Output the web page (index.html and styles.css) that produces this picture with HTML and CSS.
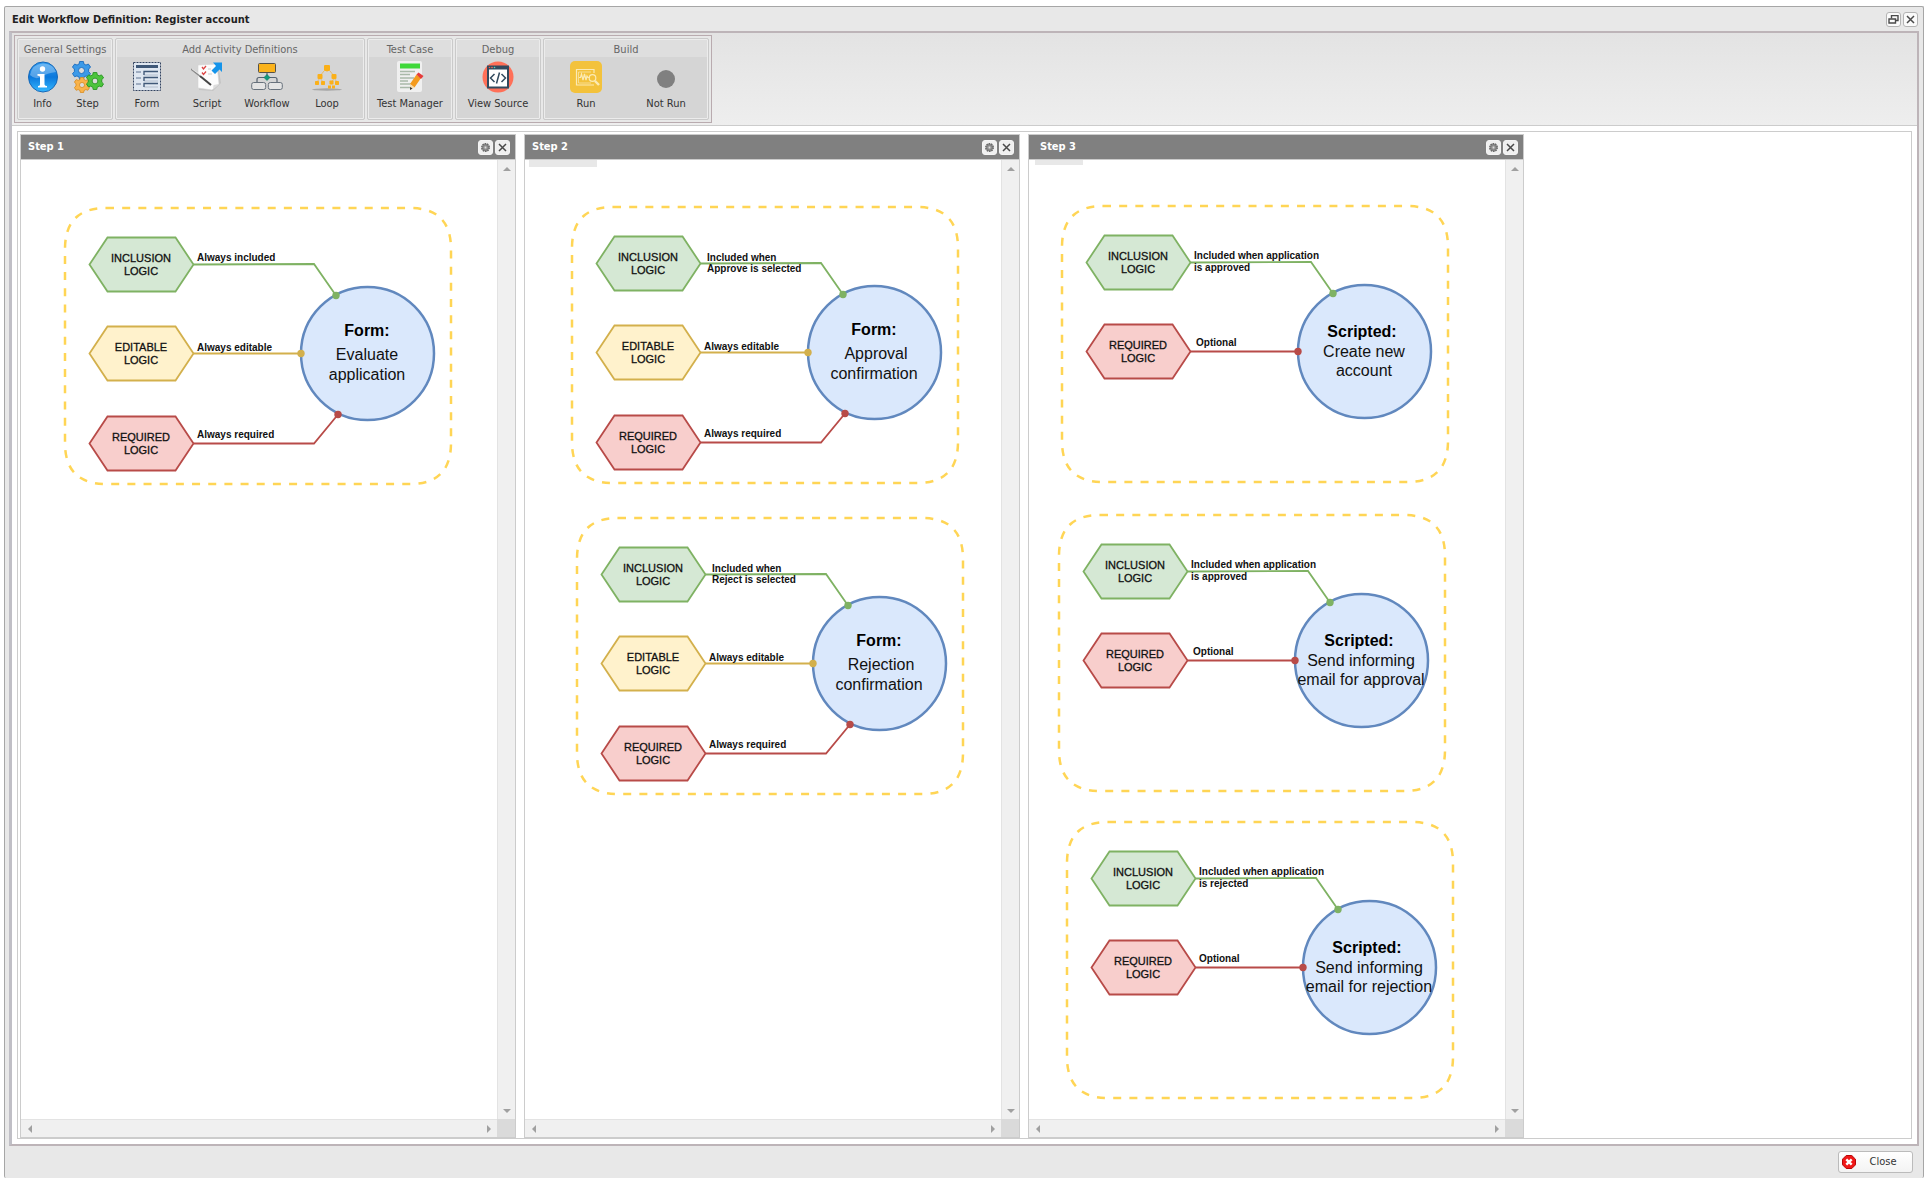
FILE: index.html
```html
<!DOCTYPE html>
<html lang="en">
<head>
<meta charset="utf-8">
<title>Edit Workflow Definition: Register account</title>
<link rel="stylesheet" href="styles.css">
</head>
<body>

<!-- Shapes shared by every activity diagram -->
<svg class="defs" width="0" height="0" aria-hidden="true">
  <defs>
    <symbol id="frame" overflow="visible">
      <path class="dash" d="M41 0H345Q386 0 386 41V235Q386 276 345 276H41Q0 276 0 235V41Q0 0 41 0Z"/>
    </symbol>
    <symbol id="hex" overflow="visible">
      <path d="M0 27L18 0H86L104 27L86 54H18Z"/>
    </symbol>
    <symbol id="gear" viewBox="0 0 9 9">
      <circle cx="4.500" cy="4.500" r="3.700" fill="#9a9a9a" stroke="#6b6b6b" stroke-width="1.600" stroke-dasharray="1.600 .7"/>
      <circle cx="4.500" cy="4.500" r="2.600" fill="#999" stroke="#707070" stroke-width=".6"/>
      <circle cx="4.500" cy="4.500" r=".9" fill="#ddd"/>
    </symbol>
    <symbol id="cross" viewBox="0 0 9 9">
      <path d="M1 1L8 8M8 1L1 8" stroke="#4a4a4a" stroke-width="1.500"/>
    </symbol>
    <linearGradient id="infoFill" x1="0" y1="0" x2="0" y2="1">
      <stop offset="0" stop-color="#2f9bf0"/><stop offset=".5" stop-color="#0b78dc"/><stop offset="1" stop-color="#35b8ff"/>
    </linearGradient>
    <symbol id="cog" viewBox="-10 -10 20 20">
      <path d="M-2-9.500L2-9.500L2.500-6.900L4.700-5.700L7.200-6.800L9.600-3.500L7.500-1.700L7.500 1.300L9.500 3.200L7.300 6.600L4.800 5.700L2.500 7L2 9.500L-2 9.500L-2.500 7L-4.800 5.700L-7.300 6.600L-9.500 3.200L-7.500 1.300L-7.500-1.700L-9.600-3.500L-7.200-6.800L-4.700-5.700L-2.500-6.900Z"/>
      <circle r="3.200" fill="#dcdcdc"/>
    </symbol>
  </defs>
</svg>

<main class="window">
  <header class="titlebar">
    <h1 class="title">Edit Workflow Definition: Register account</h1>
    <button class="tool" type="button" aria-label="Restore"><svg width="11" height="9" viewBox="0 0 11 9" fill="none" stroke="#4a4a4a"><path d="M3.500 3.500V.5H10V5.500H8" stroke-width="1.400"/><path d="M1 4H7.500V8H1Z" stroke-width="1.400"/></svg></button>
    <button class="tool" type="button" aria-label="Close window"><svg width="9" height="9"><use href="#cross"/></svg></button>
  </header>

  <div class="frame">
    <div class="toolbar">
      <div class="ribbon">
        <section class="group group-general">
          <h2 class="group-title">General Settings</h2>
          <div class="group-body">
            <button class="action" type="button">
              <svg width="32" height="32" viewBox="0 0 32 32"><ellipse cx="16" cy="16" rx="14.500" ry="15" fill="url(#infoFill)" stroke="#1668b8"/><path d="M3 14Q5 3 16 2.500Q27 3 29 11Q20 12 14 16Q8 19 3 14Z" fill="#fff" opacity=".3"/><circle cx="15.500" cy="8" r="2.700" fill="#fff"/><path d="M10.500 13H17.500V23.500Q18 25 20 25V26.500H11V25Q13 25 13 23.500V16Q13 14.800 10.500 14.800Z" fill="#fff"/></svg>
              Info
            </button>
            <button class="action" type="button">
              <svg width="32" height="32" viewBox="0 0 32 32"><use href="#cog" x="0" y="0" width="19" height="19" fill="#3c9ae8" stroke="#1f6fc0"/><use href="#cog" x="2" y="16" width="16" height="16" fill="#f9b34a" stroke="#d98a1c"/><use href="#cog" x="14" y="11" width="18" height="18" fill="#4cc43c" stroke="#279321"/></svg>
              Step
            </button>
          </div>
        </section>
        <section class="group group-activity">
          <h2 class="group-title">Add Activity Definitions</h2>
          <div class="group-body">
            <button class="action" type="button">
              <svg width="32" height="32" viewBox="0 0 32 32"><rect x="2.500" y="1.500" width="27" height="28" fill="#dfe7f1" stroke="#33435f" stroke-dasharray="2 1"/><rect x="5" y="4" width="22" height="3" fill="#3f5878"/><path d="M5 11H10M5 17H10M5 23H10" stroke="#5f7390"/><path d="M13 11.500V14H27M13 17.500V20H27M13 23.500V26H27" stroke="#b3bfce" fill="none"/><path d="M13 14V10.500H27M13 20V16.500H27M13 26V22.500H27" stroke="#3f5878" fill="none" stroke-width="1.300"/></svg>
              Form
            </button>
            <button class="action" type="button">
              <svg width="32" height="32" viewBox="0 0 32 32"><path d="M9 5L27 3L30 22L22 30L8 29Z" fill="#c4c4c4"/><path d="M7 4L26 3L28 23L21 29L7 27Z" fill="#fcfcfc" stroke="#d3d3d3" stroke-width=".6"/><path d="M22 28.500L28 23L22.500 24Z" fill="#ddd"/><path d="M11 6l1.500 2L15 5M11 11.500l1.500 2L15 10.500" fill="none" stroke="#dc4444" stroke-width="1.300"/><path d="M17 8H20M17 13H21" stroke="#ccc"/><path d="M0 8L10 16" stroke="#888" stroke-width="1.500"/><path d="M9 15L20 24" stroke="#444" stroke-width="2"/><path d="M1 8L11 15" stroke="#eee" stroke-width=".7"/><path d="M22 1.500H31V11L28.500 8.500L24 13L20.500 9.500L25 5Z" fill="#1594ea"/></svg>
              Script
            </button>
            <button class="action" type="button">
              <svg width="32" height="32" viewBox="0 0 32 32"><path d="M16 12V17M6 22V18.500Q6 16.500 8 16.500H24Q26 16.500 26 18.500V22" fill="none" stroke="#566270" stroke-width="1.200"/><rect x="7.500" y="2.500" width="17" height="9" rx="1" fill="#fbb31c" stroke="#56524a"/><path d="M16 13.500L19 16.500L16 19.500L13 16.500Z" fill="#119a7c" stroke="#0d7560" stroke-width=".6"/><rect x=".7" y="21.500" width="14" height="7" rx="2" fill="#e4e4e4" stroke="#67717c"/><rect x="17.300" y="21.500" width="14" height="7" rx="2" fill="#e4e4e4" stroke="#67717c"/></svg>
              Workflow
            </button>
            <button class="action" type="button">
              <svg width="32" height="32" viewBox="0 0 32 32"><ellipse cx="16" cy="28.500" rx="15" ry="1.200" fill="#a6a6a6"/><path d="M16 8V11M9 15L13 10M23 15L19 10M6 21L9 17L12 21M20 23L23 17L26 21" stroke="#e8b75c" stroke-width=".9" fill="none"/><g fill="#fbb018"><rect x="13" y="4" width="6" height="6" rx="1"/><rect x="6.500" y="13" width="5" height="5" rx="1"/><rect x="20.500" y="13" width="5" height="5" rx="1"/><rect x="4" y="20" width="4" height="4" rx=".8"/><rect x="10" y="20" width="4" height="4" rx=".8"/><rect x="18.500" y="19.500" width="4" height="4" rx=".8"/><rect x="24" y="20" width="4" height="4" rx=".8"/><rect x="17" y="24.500" width="3" height="3"/><rect x="21" y="24.500" width="3" height="3"/></g></svg>
              Loop
            </button>
          </div>
        </section>
        <section class="group group-test">
          <h2 class="group-title">Test Case</h2>
          <div class="group-body">
            <button class="action" type="button">
              <svg width="32" height="32" viewBox="0 0 32 32"><rect x="3" y="0" width="25" height="31" rx="2" fill="#f0f0f0"/><rect x="6" y="2.500" width="20" height="5" fill="#3fd83a"/><path d="M6 10.500H21M6 13.500H16M6 17H20M6 20H14M6 23H17M6 26.500H18" stroke="#a9b9a9" stroke-width="1.300"/><path d="M22.500 13.500L27 17L20.500 26.500L16 23Z" fill="#f49b1e"/><path d="M22.500 13.500L24.500 11.500L29.500 15L27 18Z" fill="#e53b3b"/><path d="M16 23L20.500 26.500L16 29Z" fill="#f6dcae"/><path d="M16 26L18.500 27.500L16 29Z" fill="#333"/></svg>
              Test Manager
            </button>
          </div>
        </section>
        <section class="group group-debug">
          <h2 class="group-title">Debug</h2>
          <div class="group-body">
            <button class="action" type="button">
              <svg width="32" height="32" viewBox="0 0 32 32"><circle cx="16" cy="16" r="15.500" fill="#ff7058"/><rect x="5" y="4.500" width="22" height="23" fill="#324a5e"/><rect x="7" y="8.500" width="18" height="17" fill="#fff"/><circle cx="7.500" cy="6.500" r=".8" fill="#f1543f"/><circle cx="10" cy="6.500" r=".8" fill="#ff7058"/><circle cx="12.500" cy="6.500" r=".8" fill="#4cdbc4"/><path d="M12.500 13L8.500 17L12.500 21M19.500 13L23.500 17L19.500 21M17.500 11.500L14.500 22.500" fill="none" stroke="#324a5e" stroke-width="1.500"/></svg>
              View Source
            </button>
          </div>
        </section>
        <section class="group group-build">
          <h2 class="group-title">Build</h2>
          <div class="group-body">
            <button class="action" type="button">
              <svg width="32" height="32" viewBox="0 0 32 32"><rect width="32" height="32" rx="5" fill="#f3c23c"/><g fill="none" stroke="#fbeab4" stroke-width="1.200"><path d="M24 12V8.500H6.500V24H24"/><path d="M21 11H8.500V22H21" stroke-width=".7"/><path d="M9 16.500H10.500L11.500 13L13 19L14.500 13L16 19L17 15L18 16.500H20"/><circle cx="22.500" cy="17" r="3.300"/><path d="M25 20L29 24" stroke-width="2.400"/></g></svg>
              Run
            </button>
            <button class="action" type="button">
              <svg width="32" height="32" viewBox="0 0 32 32"><circle cx="16" cy="18" r="9" fill="#808080"/></svg>
              Not Run
            </button>
          </div>
        </section>
      </div>
    </div>

    <div class="workarea">
      <div class="steps">

        <section class="step">
          <header class="step-head">
            <h2 class="step-title">Step 1</h2>
            <button class="tool tool-flat" type="button" aria-label="Step 1 settings"><svg width="9" height="9"><use href="#gear"/></svg></button>
            <button class="tool tool-flat" type="button" aria-label="Remove step 1"><svg width="9" height="9"><use href="#cross"/></svg></button>
          </header>
          <div class="step-body">
            <div class="canvas">
              <svg class="diagram evaluate" width="388" height="278">
                <use href="#frame"/>
                <g class="green"><use href="#hex" x="24.500" y="29.500"/><path class="line" d="M128.500 56.500L249 56L271 87.500"/></g>
                <g class="yellow"><use href="#hex" x="24.500" y="118.500"/><path class="line" d="M128.500 145.500H236"/></g>
                <g class="red"><use href="#hex" x="24.500" y="208.500"/><path class="line" d="M128.500 235.500H249L273 206.500"/></g>
                <circle class="task" cx="302.500" cy="145.500" r="66.500"/>
                <circle class="dot-green" cx="271" cy="87.500" r="3.700"/><circle class="dot-yellow" cx="236" cy="145.500" r="3.700"/><circle class="dot-red" cx="273" cy="206.500" r="3.700"/>
                <g class="logic"><text x="76" y="54">INCLUSION</text><text x="76" y="67">LOGIC</text><text x="76" y="143">EDITABLE</text><text x="76" y="156">LOGIC</text><text x="76" y="233">REQUIRED</text><text x="76" y="246">LOGIC</text></g>
                <g class="rule"><text x="132" y="53">Always included</text><text x="132" y="143">Always editable</text><text x="132" y="230">Always required</text></g>
                <g class="name"><text class="kind" x="302" y="128">Form:</text><text x="302" y="152">Evaluate</text><text x="302" y="172">application</text></g>
              </svg>
            </div>
            <div class="vbar"><button class="arrow up" type="button" aria-label="Scroll up"></button><button class="arrow down" type="button" aria-label="Scroll down"></button></div>
            <div class="hbar"><button class="arrow left" type="button" aria-label="Scroll left"></button><button class="arrow right" type="button" aria-label="Scroll right"></button></div>
            <div class="corner"></div>
          </div>
        </section>

        <section class="step">
          <header class="step-head">
            <h2 class="step-title">Step 2</h2>
            <button class="tool tool-flat" type="button" aria-label="Step 2 settings"><svg width="9" height="9"><use href="#gear"/></svg></button>
            <button class="tool tool-flat" type="button" aria-label="Remove step 2"><svg width="9" height="9"><use href="#cross"/></svg></button>
          </header>
          <div class="step-body">
            <div class="canvas">
              <div class="chip chip-approval"></div>
              <svg class="diagram approval" width="388" height="278">
                <use href="#frame"/>
                <g class="green"><use href="#hex" x="24.500" y="29.500"/><path class="line" d="M128.500 56.500L249 56L271 87.500"/></g>
                <g class="yellow"><use href="#hex" x="24.500" y="118.500"/><path class="line" d="M128.500 145.500H236"/></g>
                <g class="red"><use href="#hex" x="24.500" y="208.500"/><path class="line" d="M128.500 235.500H249L273 206.500"/></g>
                <circle class="task" cx="302.500" cy="145.500" r="66.500"/>
                <circle class="dot-green" cx="271" cy="87.500" r="3.700"/><circle class="dot-yellow" cx="236" cy="145.500" r="3.700"/><circle class="dot-red" cx="273" cy="206.500" r="3.700"/>
                <g class="logic"><text x="76" y="54">INCLUSION</text><text x="76" y="67">LOGIC</text><text x="76" y="143">EDITABLE</text><text x="76" y="156">LOGIC</text><text x="76" y="233">REQUIRED</text><text x="76" y="246">LOGIC</text></g>
                <g class="rule"><text x="135" y="54">Included when</text><text x="135" y="65">Approve is selected</text><text x="132" y="143">Always editable</text><text x="132" y="230">Always required</text></g>
                <g class="name"><text class="kind" x="302" y="128">Form:</text><text x="304" y="152">Approval</text><text x="302" y="172">confirmation</text></g>
              </svg>
              <svg class="diagram rejection" width="388" height="278">
                <use href="#frame"/>
                <g class="green"><use href="#hex" x="24.500" y="29.500"/><path class="line" d="M128.500 56.500L249 56L271 87.500"/></g>
                <g class="yellow"><use href="#hex" x="24.500" y="118.500"/><path class="line" d="M128.500 145.500H236"/></g>
                <g class="red"><use href="#hex" x="24.500" y="208.500"/><path class="line" d="M128.500 235.500H249L273 206.500"/></g>
                <circle class="task" cx="302.500" cy="145.500" r="66.500"/>
                <circle class="dot-green" cx="271" cy="87.500" r="3.700"/><circle class="dot-yellow" cx="236" cy="145.500" r="3.700"/><circle class="dot-red" cx="273" cy="206.500" r="3.700"/>
                <g class="logic"><text x="76" y="54">INCLUSION</text><text x="76" y="67">LOGIC</text><text x="76" y="143">EDITABLE</text><text x="76" y="156">LOGIC</text><text x="76" y="233">REQUIRED</text><text x="76" y="246">LOGIC</text></g>
                <g class="rule"><text x="135" y="54">Included when</text><text x="135" y="65">Reject is selected</text><text x="132" y="143">Always editable</text><text x="132" y="230">Always required</text></g>
                <g class="name"><text class="kind" x="302" y="128">Form:</text><text x="304" y="152">Rejection</text><text x="302" y="172">confirmation</text></g>
              </svg>
            </div>
            <div class="vbar"><button class="arrow up" type="button" aria-label="Scroll up"></button><button class="arrow down" type="button" aria-label="Scroll down"></button></div>
            <div class="hbar"><button class="arrow left" type="button" aria-label="Scroll left"></button><button class="arrow right" type="button" aria-label="Scroll right"></button></div>
            <div class="corner"></div>
          </div>
        </section>

        <section class="step">
          <header class="step-head step-head-wide">
            <h2 class="step-title">Step 3</h2>
            <button class="tool tool-flat" type="button" aria-label="Step 3 settings"><svg width="9" height="9"><use href="#gear"/></svg></button>
            <button class="tool tool-flat" type="button" aria-label="Remove step 3"><svg width="9" height="9"><use href="#cross"/></svg></button>
          </header>
          <div class="step-body">
            <div class="canvas">
              <div class="chip chip-account"></div>
              <svg class="diagram account" width="388" height="278">
                <use href="#frame"/>
                <g class="green"><use href="#hex" x="24.500" y="29.500"/><path class="line" d="M128.500 56.500L249 56L271 87.500"/></g>
                <g class="red"><use href="#hex" x="24.500" y="118.500"/><path class="line" d="M128.500 145.500H236"/></g>
                <circle class="task" cx="302.500" cy="145.500" r="66.500"/>
                <circle class="dot-green" cx="271" cy="87.500" r="3.700"/><circle class="dot-red" cx="236" cy="145.500" r="3.700"/>
                <g class="logic"><text x="76" y="54">INCLUSION</text><text x="76" y="67">LOGIC</text><text x="76" y="143">REQUIRED</text><text x="76" y="156">LOGIC</text></g>
                <g class="rule"><text x="132" y="53">Included when application</text><text x="132" y="65">is approved</text><text x="134" y="140">Optional</text></g>
                <g class="name"><text class="kind" x="300" y="131">Scripted:</text><text x="302" y="151">Create new</text><text x="302" y="170">account</text></g>
              </svg>
              <svg class="diagram mail-approval" width="388" height="278">
                <use href="#frame"/>
                <g class="green"><use href="#hex" x="24.500" y="29.500"/><path class="line" d="M128.500 56.500L249 56L271 87.500"/></g>
                <g class="red"><use href="#hex" x="24.500" y="118.500"/><path class="line" d="M128.500 145.500H236"/></g>
                <circle class="task" cx="302.500" cy="145.500" r="66.500"/>
                <circle class="dot-green" cx="271" cy="87.500" r="3.700"/><circle class="dot-red" cx="236" cy="145.500" r="3.700"/>
                <g class="logic"><text x="76" y="54">INCLUSION</text><text x="76" y="67">LOGIC</text><text x="76" y="143">REQUIRED</text><text x="76" y="156">LOGIC</text></g>
                <g class="rule"><text x="132" y="53">Included when application</text><text x="132" y="65">is approved</text><text x="134" y="140">Optional</text></g>
                <g class="name"><text class="kind" x="300" y="131">Scripted:</text><text x="302" y="151">Send informing</text><text x="302" y="170">email for approval</text></g>
              </svg>
              <svg class="diagram mail-rejection" width="388" height="278">
                <use href="#frame"/>
                <g class="green"><use href="#hex" x="24.500" y="29.500"/><path class="line" d="M128.500 56.500L249 56L271 87.500"/></g>
                <g class="red"><use href="#hex" x="24.500" y="118.500"/><path class="line" d="M128.500 145.500H236"/></g>
                <circle class="task" cx="302.500" cy="145.500" r="66.500"/>
                <circle class="dot-green" cx="271" cy="87.500" r="3.700"/><circle class="dot-red" cx="236" cy="145.500" r="3.700"/>
                <g class="logic"><text x="76" y="54">INCLUSION</text><text x="76" y="67">LOGIC</text><text x="76" y="143">REQUIRED</text><text x="76" y="156">LOGIC</text></g>
                <g class="rule"><text x="132" y="53">Included when application</text><text x="132" y="65">is rejected</text><text x="132" y="140">Optional</text></g>
                <g class="name"><text class="kind" x="300" y="131">Scripted:</text><text x="302" y="151">Send informing</text><text x="302" y="170">email for rejection</text></g>
              </svg>
            </div>
            <div class="vbar"><button class="arrow up" type="button" aria-label="Scroll up"></button><button class="arrow down" type="button" aria-label="Scroll down"></button></div>
            <div class="hbar"><button class="arrow left" type="button" aria-label="Scroll left"></button><button class="arrow right" type="button" aria-label="Scroll right"></button></div>
            <div class="corner"></div>
          </div>
        </section>

      </div>
    </div>
  </div>

  <footer class="footer">
    <button class="close" type="button">
      <svg width="14" height="14" viewBox="0 0 14 14"><path d="M4.200.5H9.800L13.500 4.200V9.800L9.800 13.500H4.200L.5 9.800V4.200Z" fill="#f01818" stroke="#b80808"/><path d="M4.300 4.300L9.700 9.700M9.700 4.300L4.300 9.700" stroke="#fff" stroke-width="2.400"/></svg>
      <span class="close-label">Close</span>
    </button>
  </footer>
</main>

</body>
</html>
```
FILE: styles.css
```css
* { box-sizing: border-box; }

body {
  margin: 0;
  background: #fff;
  color: #333;
  font: 11px/14px "DejaVu Sans Condensed", "DejaVu Sans", sans-serif;
}

h1, h2 { margin: 0; font-size: 11px; line-height: 14px; }

button {
  margin: 0;
  padding: 0;
  border: 0;
  background: none;
  color: inherit;
  font: inherit;
}

svg { display: block; }
.defs { position: absolute; }

/* Window */
.window {
  display: flex;
  flex-direction: column;
  min-height: calc(100vh - 10px);
  margin: 6px 6px 4px 4px;
  border: 1px solid #a6a6a6;
  border-bottom: 0;
  border-radius: 2px;
  background: #e8e8e8;
}

.titlebar {
  display: flex;
  align-items: center;
  gap: 2px;
  height: 24px;
  padding: 0 5px 0 7px;
}

.title { flex: 1; padding-top: 2px; color: #222; font-weight: bold; }

.tool {
  display: grid;
  place-items: center;
  width: 15px;
  height: 15px;
  border: 1px solid #b4b4b4;
  border-radius: 3px;
  background: #fafafa;
}

.tool-flat { border-color: #f4f4f4; background: #f0f0f0; }

.frame {
  display: flex;
  flex: 1;
  flex-direction: column;
  margin: 0 4px;
  border: 2px solid #bdb4b8;
  border-left: 3px solid #c0bfc6;
}

/* Toolbar */
.toolbar {
  display: flex;
  padding: 2px;
  border-bottom: 1px solid #ccc;
  background: linear-gradient(#e3e3e3, #eee);
}

.ribbon {
  display: flex;
  gap: 2px;
  padding: 2px;
  border: 1px solid #b9abaf;
  background: #e8e8e8;
}

.group {
  border: 1px solid #cacaca;
  border-radius: 2px;
  background: #d5d5d5;
  box-shadow: inset 0 0 0 1px #ececec;
  padding: 1px;
}

.group-general { width: 96px; }
.group-activity { width: 250px; }
.group-test, .group-debug { width: 86px; }
.group-build { width: 166px; }

.group-title {
  padding: 3px 0 0;
  background: #dedede;
  color: #666;
  font-weight: normal;
  text-align: center;
}

.group-body {
  display: flex;
  justify-content: center;
  height: 61px;
  padding-top: 4px;
}

.group-activity .group-body { justify-content: flex-start; }

.action {
  display: flex;
  flex-direction: column;
  align-items: center;
  gap: 4px;
  width: 60px;
  white-space: nowrap;
}

.group-general .action { width: 45px; }
.group-test .action, .group-debug .action, .group-build .action { width: 80px; }

/* Steps */
.workarea {
  display: flex;
  flex: 1;
  padding: 5px;
  background: #fff;
}

.steps {
  display: flex;
  flex: 1;
  gap: 8px;
  padding: 2px 2px 0;
  border: 1px solid #ccc;
}

.step {
  display: flex;
  flex: 0 1 496px;
  flex-direction: column;
  border: 1px solid #ccc;
}

.step-head {
  display: flex;
  align-items: center;
  gap: 2px;
  height: 25px;
  padding: 0 5px 0 7px;
  border-bottom: 1px solid #ccc;
  background: #808080;
}

.step-head-wide { padding-left: 11px; }
.step-title { flex: 1; color: #fff; font-weight: bold; }

.step-body {
  display: grid;
  flex: 1;
  grid-template: 1fr 18px / 1fr 18px;
}

.canvas { position: relative; min-height: 760px; overflow: hidden; }

.vbar, .hbar {
  display: flex;
  justify-content: space-between;
  background: #f0f0f0;
}

.vbar { flex-direction: column; border-left: 1px solid #e3e3e3; }
.hbar { border-top: 1px solid #e3e3e3; }
.corner { background: #dadada; }

.arrow { display: grid; place-items: center; width: 17px; height: 17px; }
.arrow::before { content: ""; border: 4px solid transparent; }
.arrow.up::before { border-top: 0; border-bottom-color: #a0a0a0; }
.arrow.down::before { border-bottom: 0; border-top-color: #a0a0a0; }
.arrow.left::before { border-left: 0; border-right-color: #a0a0a0; }
.arrow.right::before { border-right: 0; border-left-color: #a0a0a0; }

/* Activities placed on the step canvases */
.chip { position: absolute; top: 0; background: #e8e8e8; }
.chip-approval { left: 4px; width: 68px; height: 7px; }
.chip-account { left: 6px; width: 48px; height: 5px; }

.diagram { position: absolute; overflow: visible; }
.evaluate { left: 44px; top: 48px; }
.approval { left: 47px; top: 47px; }
.rejection { left: 52px; top: 358px; }
.account { left: 33px; top: 46px; }
.mail-approval { left: 30px; top: 355px; }
.mail-rejection { left: 38px; top: 662px; }

.dash { fill: none; stroke: #ffd555; stroke-width: 2.5; stroke-dasharray: 8 8.17; }

.green { fill: #d5e8d4; stroke: #7fb263; stroke-width: 1.8; }
.yellow { fill: #fff2cc; stroke: #d3b04c; stroke-width: 1.8; }
.red { fill: #f8cecc; stroke: #b84b48; stroke-width: 1.8; }
.line { fill: none; }
.task { fill: #dae8fc; stroke: #6188be; stroke-width: 2.5; }
.dot-green { fill: #7fb263; }
.dot-yellow { fill: #d3b04c; }
.dot-red { fill: #b84b48; }

.logic, .rule, .name { fill: #111; font-family: "Liberation Sans", Arial, sans-serif; }
.logic { font-size: 11px; text-anchor: middle; stroke: #111; stroke-width: .3; }
.rule { font-size: 10px; font-weight: bold; }
.name { font-size: 16px; text-anchor: middle; }
.kind { fill: #000; font-weight: bold; }

/* Footer */
.footer {
  display: flex;
  justify-content: flex-end;
  padding: 5px 10px;
}

.close {
  display: flex;
  align-items: center;
  width: 75px;
  height: 22px;
  padding: 0 2px 0 3px;
  border: 1px solid #bbb;
  border-radius: 3px;
  background: linear-gradient(#fff, #f3f3f3);
}

.close-label { flex: 1; text-align: center; }
```
